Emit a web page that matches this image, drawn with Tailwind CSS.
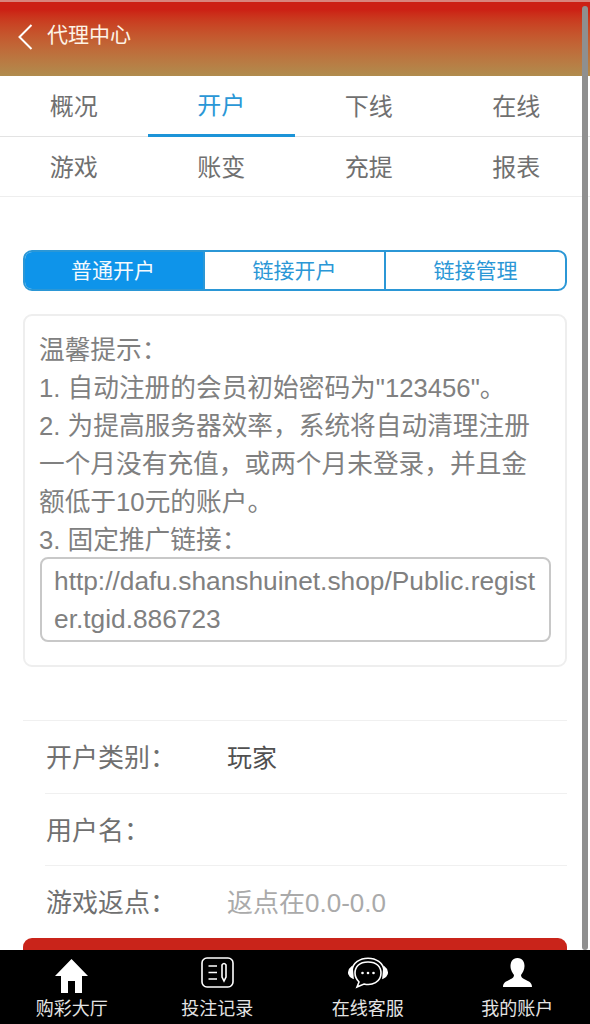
<!DOCTYPE html>
<html lang="zh-CN">
<head>
  <meta charset="UTF-8">
  <meta name="viewport" content="width=device-width, initial-scale=1.0">
  <title>代理中心</title>
  <script src="https://cdn.jsdelivr.net/npm/@tailwindcss/browser@4"></script>
</head>
<body class="bg-white h-screen overflow-hidden font-['Liberation_Sans','Noto_Sans_CJK_SC',sans-serif]">

  <!-- header -->
  <div class="h-[76px] flex items-center bg-gradient-to-b from-[#cc1f14] from-10% to-[#b08c4e] border-t-2 border-[#d8837c]">
    <svg class="ml-[18px] mb-[5px] w-[15px] h-[26px]" viewBox="0 0 15 26" fill="none" stroke="#fff" stroke-width="2">
      <path d="M13.5 1 L1.5 13 L13.5 25"></path>
    </svg>
    <span class="ml-[14px] mb-[9px] text-[21px] text-[#fdf3e6]">代理中心</span>
  </div>

  <!-- tabs -->
  <div class="grid grid-cols-4 h-[61px] border-b border-[#e3e3e3] text-[24px] text-[#707070]">
    <div class="flex items-center justify-center pt-[2px]">概况</div>
    <div class="flex items-center justify-center pt-[2px] text-[#2a97d6] border-b-[3px] border-[#1c94d8] mb-[-1px]">开户</div>
    <div class="flex items-center justify-center pt-[2px]">下线</div>
    <div class="flex items-center justify-center pt-[2px]">在线</div>
  </div>
  <div class="grid grid-cols-4 h-[60px] border-b border-[#eeeeee] text-[24px] text-[#707070]">
    <div class="flex items-center justify-center pt-[2px]">游戏</div>
    <div class="flex items-center justify-center pt-[2px]">账变</div>
    <div class="flex items-center justify-center pt-[2px]">充提</div>
    <div class="flex items-center justify-center pt-[2px]">报表</div>
  </div>

  <div class="px-[23px]">
    <!-- segment -->
    <div class="mt-[53px] h-[41px] flex border-2 border-[#2b97d6] rounded-[9px] overflow-hidden text-[21px] text-[#2b97d6]">
      <div class="w-[180px] -ml-[2px] flex items-center justify-center bg-[#0e94ea] text-[#f4f9fd]">普通开户</div>
      <div class="w-[181px] flex items-center justify-center border-l-2 border-[#2b97d6]">链接开户</div>
      <div class="flex-1 flex items-center justify-center border-l-2 border-[#2b97d6]">链接管理</div>
    </div>

    <!-- notice -->
    <div class="mt-[23px] h-[353px] border-2 border-[#eeeeee] rounded-[9px] pt-[15px] pl-[14px] pr-[14px] text-[25.7px] leading-[38px] text-[#808080]">
      <p>温馨提示：</p>
      <p>1. 自动注册的会员初始密码为"123456"。</p>
      <p>2. 为提高服务器效率，系统将自动清理注册一个月没有充值，或两个月未登录，并且金额低于10元的账户。</p>
      <p>3. 固定推广链接：</p>
      <div class="mt-[-2px] h-[85px] ml-px border-2 border-[#c8c8c8] rounded-[8px] pl-[12px] pr-[10px] pt-[3px] break-all text-[26.3px]">http://dafu.shanshuinet.shop/Public.register.tgid.886723</div>
    </div>

    <!-- form -->
    <div class="mt-[53px] border-t border-[#f0f0f0] text-[26px]">
      <div class="h-[73px] ml-[22px] flex items-center border-b border-[#f0f0f0] pt-[3px]">
        <span class="w-[182px] pl-px text-[#707070]">开户类别：</span>
        <span class="text-[25px] text-[#505050]">玩家</span>
      </div>
      <div class="h-[72px] ml-[22px] flex items-center border-b border-[#f0f0f0] pt-[3px]">
        <span class="w-[182px] pl-px text-[#707070]">用户名：</span>
      </div>
      <div class="h-[72px] ml-[22px] flex items-center pt-[3px]">
        <span class="w-[182px] pl-px text-[#707070]">游戏返点：</span>
        <span class="text-[#aaa]">返点在0.0-0.0</span>
      </div>
    </div>
    <div class="h-[50px] bg-[#c9241a] rounded-t-[9px]"></div>
  </div>

  <!-- scrollbar -->
  <div class="fixed right-[2px] top-[6px] w-[6px] h-[944px] rounded-full bg-[#8f8f8f]"></div>

  <!-- bottom nav -->
  <div class="fixed bottom-0 inset-x-0 h-[74px] bg-black grid grid-cols-4 text-[18px] leading-[20px] text-[#e4e4e4]">
    <div class="flex flex-col items-center pr-[4px]">
      <svg class="mt-[9px] w-[33px] h-[34px]" viewBox="0 0 33 34" fill="#fff">
        <path d="M16.5 0 L33 17 L27 17 L27 34 L20 34 L20 22 L13 22 L13 34 L6 34 L6 17 L0 17 Z"></path>
      </svg>
      <span class="mt-[6px]">购彩大厅</span>
    </div>
    <div class="flex flex-col items-center pr-[8px]">
      <svg class="mt-[7px] w-[33px] h-[31px]" viewBox="0 0 33 31" fill="none" stroke="#fff" stroke-width="1.6">
        <rect x="1" y="1" width="31" height="29" rx="5"></rect>
        <path d="M7.5 9 H16 M7.5 15.5 H16 M7.5 22 H16"></path>
        <path d="M21 8 Q23 5 25 8 V20 L23 24 L21 20 Z"></path>
      </svg>
      <span class="mt-[11px]">投注记录</span>
    </div>
    <div class="flex flex-col items-center pr-[2px]">
      <svg class="mt-[7px] w-[40px] h-[32px]" viewBox="0 0 40 32" fill="none" stroke="#fff" stroke-width="1.6">
        <path d="M4 14 C5 -3 35 -3 36 14"></path>
        <path d="M4 10 Q0 13 1 17 Q2 20 5 21 Z M36 10 Q40 13 39 17 Q38 20 35 21 Z" fill="#fff"></path>
        <path d="M20 5 C11 5 7 10 7 16 C7 20 9 23 11 25 L9 30 L16 27 C24 29 33 25 33 16 C33 10 29 5 20 5 Z"></path>
        <circle cx="14.5" cy="16" r="1.3" fill="#fff" stroke="none"></circle>
        <circle cx="20" cy="16" r="1.3" fill="#fff" stroke="none"></circle>
        <circle cx="25.5" cy="16" r="1.3" fill="#fff" stroke="none"></circle>
      </svg>
      <span class="mt-[10px]">在线客服</span>
    </div>
    <div class="flex flex-col items-center pl-[2px]">
      <svg class="mt-[8px] w-[29px] h-[29px]" viewBox="0 0 29 29" fill="#fff">
        <path d="M14.5 0 C9.5 0 7.5 4 7.5 8 C7.5 12 9.5 15 11 17 C11 19 10 20 7 21.5 C3 23.5 0 24.5 0 29 H29 C29 24.5 26 23.5 22 21.5 C19 20 18 19 18 17 C19.5 15 21.5 12 21.5 8 C21.5 4 19.5 0 14.5 0 Z"></path>
      </svg>
      <span class="mt-[12px]">我的账户</span>
    </div>
  </div>

</body>
</html>
